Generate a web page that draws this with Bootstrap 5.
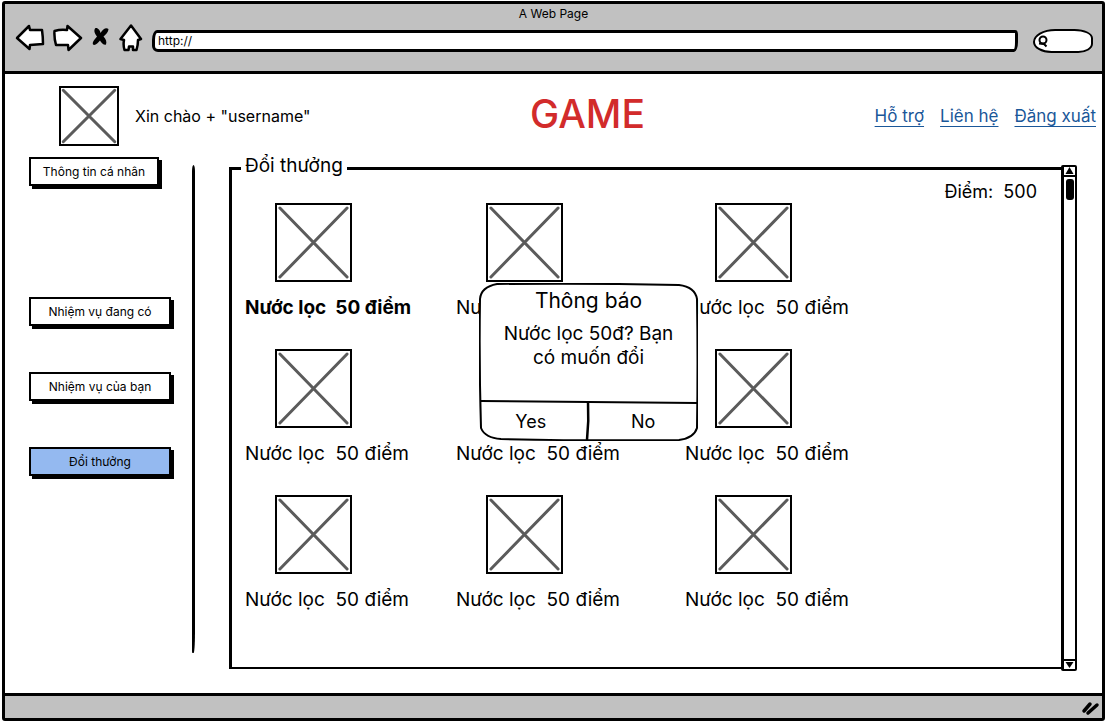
<!DOCTYPE html>
<html lang="vi">
<head>
<meta charset="utf-8">
<meta name="viewport" content="width=device-width, initial-scale=1">
<title>A Web Page</title>
<link href="https://cdn.jsdelivr.net/npm/bootstrap@5.3.0/dist/css/bootstrap.min.css" rel="stylesheet">
<style>
  body { font-family: Inter, "Noto Sans", sans-serif; font-size: 17px; line-height: 24px; color: #000; padding: 1px 1px 0 2px; }
  .browser { min-height: calc(100vh - 1px); border: 3px solid #000; border-radius: 3px; }
  .chrome-top { background: #c1c1c1; border-bottom: 3px solid #000; height: 70px; }
  .page-title { font-size: 12px; line-height: 20px; }
  .toolbar { padding: 0 9px 0 10px; }
  .tool { background: none; border: 0; padding: 0; line-height: 0; }
  .address { height: 22px; border: 3px solid #000; border-radius: 5px 3px 4px 6px / 10px 4px 10px 6px; font-size: 12px; padding: 0 3px; background: #fff; color: #000; min-width: 0; margin: 6px 15px 0 9px; }
  .search-box { width: 60px; height: 24px; border: 2px solid #000; border-radius: 24px 20px 16px 20px / 14px 10px 10px 12px; background: #fff; margin-top: 5px; padding-left: 2px; }
  .search-box input { width: 36px; border: 0; background: none; outline: 0; padding: 0; font-size: 12px; line-height: 16px; }
  .site-head { display: grid; grid-template-columns: 47fr auto 45fr; align-items: center; padding: 12px 6px 11px 54px; }
  .avatar { width: 60px; height: 60px; }
  .greeting { font-size: 16px; }
  .brand-title { color: #d22b2b; font-size: 39px; line-height: 48px; font-weight: 500; padding-bottom: 5px; }
  .site-links a { color: #1a5799; font-size: 17px; text-underline-offset: 4px; text-decoration-thickness: 1px; }
  .side { width: 188px; padding: 0 0 40px 24px; flex: none; }
  .side-menu { gap: 46px; }
  .side-btn { width: 142px; height: 29px; border: 2px solid #000; background: #fff; box-shadow: 3px 3px 0 #000; font-size: 12px; line-height: 20px; color: #000; padding: 0; }
  .side-btn.first-item { width: 130px; margin-bottom: 65px; }
  .side-btn.current { background: #94b9f0; }
  .divider { width: 3px; background: #000; border-radius: 3px 3px 3px 1px / 12px 12px 40px 4px; margin: 8px 0 40px -1px; flex: none; }
  .panel { margin: 8px 25px 22px 34px; min-width: 0; }
  .prize-set { border: 3px solid #000; border-width: 3px 0 2px 3px; min-width: 0; margin: -9px 0 2px; }
  .prize-set legend { float: none; width: auto; font-size: 19px; line-height: 20px; margin: 0 0 0 9px; padding: 0 4px 4px; }
  .points { font-size: 18px; line-height: 23px; padding-right: 24px; }
  .prizes { display: grid; grid-template-columns: 211fr 229fr 376fr; row-gap: 26px; padding-left: 13px; }
  .prize { padding-bottom: 3px; }
  .thumb { width: 77px; height: 79px; margin: 0 0 14px 30px; }
  .prize-name { font-size: 19px; white-space: nowrap; }
  .ph { border: 2px solid #000; background: #fff; display: block; }
  .scroll-rail { width: 16px; border: 2px solid #000; border-left-width: 3px; border-radius: 2px; background: #fff; flex: none; }
  .rail-end { height: 10px; line-height: 0; border: 0 solid #000; }
  .rail-up { border-bottom-width: 2px; }
  .rail-down { border-top-width: 2px; }
  .rail-thumb { width: 8px; height: 21px; border-radius: 3px; background: #000; margin: 2px auto 0; }
  .notice { left: 250px; top: 118px; width: 219px; height: 158px; }
  .notice-frame { inset: 0; z-index: -1; }
  .notice { z-index: 1; }
  .notice h2 { font-size: 21px; line-height: 24px; font-weight: 400; margin: 6px 0 9px; }
  .notice-text { font-size: 19px; line-height: 24px; }
  .notice-actions { height: 39px; }
  .notice-actions button { border: 0; background: none; font-size: 18px; padding: 0; color: #000; }
  .notice-yes { padding-right: 6px !important; }
  .chrome-bottom { height: 25px; background: #c1c1c1; border-top: 3px solid #000; line-height: 0; }
</style>
</head>
<body>
<svg class="d-none" aria-hidden="true">
  <symbol id="cross" viewBox="0 0 100 100" preserveAspectRatio="none">
    <path d="M4 4L96 96M96 4L4 96" fill="none" stroke="#5b5b5b" stroke-width="3" stroke-linecap="round" vector-effect="non-scaling-stroke"/>
  </symbol>
</svg>
<div class="browser d-flex flex-column">
  <div class="chrome-top flex-shrink-0">
    <div class="page-title text-center">A Web Page</div>
    <div class="toolbar d-flex align-items-start">
      <button class="tool" aria-label="Back"><svg width="30" height="28" viewBox="0 0 30 28"><path d="M2 14L14 2L15 6L27 6Q28 13 28 20L15 21L14.500 25Z" fill="#fff" stroke="#000" stroke-width="2.500" stroke-linejoin="round"/></svg></button>
      <button class="tool ms-2" aria-label="Forward"><svg width="30" height="28" viewBox="0 0 30 28"><path d="M1.500 7Q8 5 14 6L14.500 2L28 14L15.500 26L15 21L3 21Q1 14 1.500 7Z" fill="#fff" stroke="#000" stroke-width="2.500" stroke-linejoin="round"/></svg></button>
      <button class="tool ms-2" aria-label="Stop"><svg width="20" height="28" viewBox="0 0 20 28"><path d="M4 4.500C6 3 9 6 9.500 9C12 5 15 3 17.500 5C17 9 14 11 12.500 12.500C15 15 16 18 15 20.500C12 21.500 10 18 9 16.500C7 19 4 22 2 20.500C1 18 4 15 6 12.500C4 10 2.500 7 4 4.500Z"/></svg></button>
      <button class="tool ms-2" aria-label="Home"><svg width="24" height="28" viewBox="0 0 24 28"><path d="M12 1.500L22 15L19 16Q19 21 17.500 26L14 26L14 22.500L10 22.500L9.500 26L5.500 26Q4 21 5 16L1.500 15Z" fill="#fff" stroke="#000" stroke-width="2.500" stroke-linejoin="round"/></svg></button>
      <input class="address flex-grow-1" type="text" value="http://" aria-label="Address">
      <label class="search-box d-flex align-items-center"><svg width="12" height="14" viewBox="0 0 12 14"><circle cx="6" cy="6" r="3.500" fill="none" stroke="#000" stroke-width="2"/><path d="M2 9.500L7 10L9.500 12.500" fill="none" stroke="#000" stroke-width="2"/></svg><input type="text" aria-label="Search"></label>
    </div>
  </div>

  <header class="site-head">
    <div class="d-flex align-items-center">
      <svg class="ph avatar" role="img" aria-label="Avatar"><use href="#cross"/></svg>
      <span class="greeting ms-3">Xin chào + "username"</span>
    </div>
    <h1 class="brand-title m-0">GAME</h1>
    <nav class="site-links d-flex justify-content-end gap-3">
      <a href="#">Hỗ trợ</a><a href="#">Liên hệ</a><a href="#">Đăng xuất</a>
    </nav>
  </header>

  <main class="d-flex flex-grow-1">
    <nav class="side">
      <div class="side-menu d-flex flex-column">
        <button class="side-btn first-item">Thông tin cá nhân</button>
        <button class="side-btn">Nhiệm vụ đang có</button>
        <button class="side-btn">Nhiệm vụ của bạn</button>
        <button class="side-btn current">Đổi thưởng</button>
      </div>
    </nav>
    <div class="divider"></div>
    <section class="panel d-flex flex-grow-1 position-relative">
      <fieldset class="prize-set flex-grow-1">
        <legend>Đổi thưởng</legend>
        <div class="points text-end">Điểm:&nbsp; 500</div>
        <div class="prizes">
          <div class="prize"><svg class="ph thumb"><use href="#cross"/></svg><div class="prize-name fw-bold">Nước lọc&nbsp; 50 điểm</div></div>
          <div class="prize"><svg class="ph thumb"><use href="#cross"/></svg><div class="prize-name">Nước lọc&nbsp; 50 điểm</div></div>
          <div class="prize"><svg class="ph thumb"><use href="#cross"/></svg><div class="prize-name">Nước lọc&nbsp; 50 điểm</div></div>
          <div class="prize"><svg class="ph thumb"><use href="#cross"/></svg><div class="prize-name">Nước lọc&nbsp; 50 điểm</div></div>
          <div class="prize"><svg class="ph thumb"><use href="#cross"/></svg><div class="prize-name">Nước lọc&nbsp; 50 điểm</div></div>
          <div class="prize"><svg class="ph thumb"><use href="#cross"/></svg><div class="prize-name">Nước lọc&nbsp; 50 điểm</div></div>
          <div class="prize"><svg class="ph thumb"><use href="#cross"/></svg><div class="prize-name">Nước lọc&nbsp; 50 điểm</div></div>
          <div class="prize"><svg class="ph thumb"><use href="#cross"/></svg><div class="prize-name">Nước lọc&nbsp; 50 điểm</div></div>
          <div class="prize"><svg class="ph thumb"><use href="#cross"/></svg><div class="prize-name">Nước lọc&nbsp; 50 điểm</div></div>
        </div>
      </fieldset>
      <div class="scroll-rail d-flex flex-column" aria-hidden="true">
        <div class="rail-end rail-up text-center"><svg width="9" height="7" viewBox="0 0 9 7"><path d="M4.500 0L8.500 7H.5Z"/></svg></div>
        <div class="rail-thumb"></div>
        <div class="rail-end rail-down text-center mt-auto"><svg width="9" height="7" viewBox="0 0 9 7"><path d="M.5 1H8.500L4.500 7Z"/></svg></div>
      </div>
      <div class="notice position-absolute d-flex flex-column text-center" role="dialog" aria-labelledby="notice-title">
        <svg class="notice-frame position-absolute w-100 h-100" viewBox="0 0 219 158" aria-hidden="true">
          <path d="M1 16Q2 4 18 1Q110 0 200 2Q216 4 218 16Q219 80 218 145Q215 155 200 157Q110 158 22 156Q6 155 2 145Q0 80 1 16Z" fill="#fff" stroke="#000" stroke-width="2"/>
          <path d="M2 118Q110 119 218 120" fill="none" stroke="#000" stroke-width="2"/>
          <path d="M109 118Q110 138 108 157" fill="none" stroke="#000" stroke-width="2.500"/>
        </svg>
        <h2 id="notice-title">Thông báo</h2>
        <div class="notice-text flex-grow-1">Nước lọc 50đ? Bạn<br>có muốn đổi</div>
        <div class="notice-actions d-flex">
          <button class="w-50 notice-yes">Yes</button><button class="w-50">No</button>
        </div>
      </div>
    </section>
  </main>

  <footer class="chrome-bottom text-end flex-shrink-0">
    <svg width="22" height="22" viewBox="0 0 22 22"><path d="M4 15L10 8M8 17L17 9" stroke="#000" stroke-width="3.500" stroke-linecap="round"/></svg>
  </footer>
</div>
<script src="https://cdn.jsdelivr.net/npm/bootstrap@5.3.0/dist/js/bootstrap.bundle.min.js"></script>
</body>
</html>
